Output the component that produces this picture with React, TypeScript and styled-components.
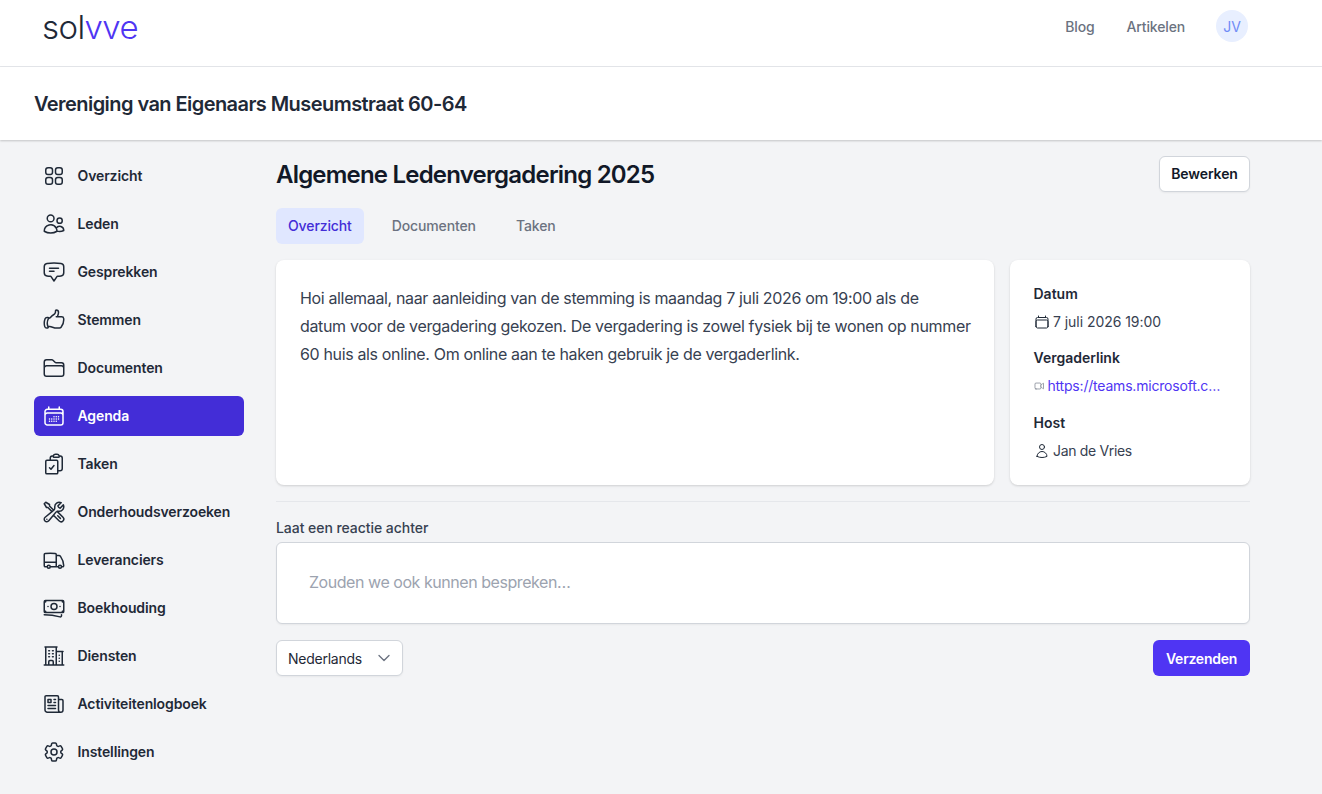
import React from 'react';
import styled, { createGlobalStyle } from 'styled-components';
import { IconType } from 'react-icons';
import {
    HiOutlineSquares2X2,
    HiOutlineUsers,
    HiOutlineChatBubbleBottomCenterText,
    HiOutlineHandThumbUp,
    HiOutlineFolder,
    HiOutlineCalendarDays,
    HiOutlineClipboardDocumentCheck,
    HiOutlineWrenchScrewdriver,
    HiOutlineTruck,
    HiOutlineBanknotes,
    HiOutlineBuildingOffice2,
    HiOutlineNewspaper,
    HiOutlineCog6Tooth,
    HiOutlineCalendar,
    HiOutlineVideoCamera,
    HiOutlineUser,
    HiOutlineChevronDown,
} from 'react-icons/hi2';

const GlobalStyle = createGlobalStyle`
    html, body {
        margin: 0;
        padding: 0;
        background: #f3f4f6;
        font-family: Inter, "Liberation Sans", sans-serif;
        color: #111827;
    }
    * {
        box-sizing: border-box;
    }
`;

const Page = styled.div`
    width: 1322px;
    height: 794px;
    overflow: hidden;
    display: flex;
    flex-direction: column;
`;

const TopBar = styled.header`
    height: 67px;
    flex-shrink: 0;
    background: white;
    border-bottom: 1px solid #e5e7eb;
    display: flex;
    align-items: center;
    justify-content: space-between;
    padding: 0 74px 0 42px;
`;

const Logo = styled.div`
    font-family: Inter, sans-serif;
    font-size: 33px;
    font-weight: 300;
    letter-spacing: -0.6px;
    line-height: 40px;
    color: #1f2937;
    margin-top: -13px;

    > span {
        color: #4f35f3;
    }
`;

const TopNav = styled.nav`
    display: flex;
    align-items: center;
    gap: 32px;
    margin-top: -15px;
`;

const TopLink = styled.a`
    padding-top: 2px;
    font-size: 14px;
    font-weight: 500;
    letter-spacing: -0.15px;
    color: #6b7280;
`;

const Avatar = styled.div`
    width: 32px;
    height: 32px;
    margin-left: -1px;
    border-radius: 50%;
    background: #e8efff;
    color: #6f8cf6;
    font-size: 14px;
    display: flex;
    align-items: center;
    justify-content: center;
    padding-top: 2px;
`;

const SubHeader = styled.div`
    height: 73px;
    flex-shrink: 0;
    background: white;
    box-shadow: 0 1px 2px rgba(0, 0, 0, 0.2);
    display: flex;
    align-items: center;
    padding: 0 34px;
    z-index: 1;
`;

const OrgName = styled.h1`
    margin: 0;
    font-size: 20px;
    font-weight: 600;
    line-height: 28px;
    letter-spacing: -0.56px;
    color: #1f2937;
`;

const Body = styled.div`
    flex: 1;
    display: flex;
    padding: 16px 72px 0 34px;
    gap: 32px;
`;

const Sidebar = styled.nav`
    width: 210px;
    flex-shrink: 0;
    display: flex;
    flex-direction: column;
    gap: 8px;
`;

const SideItem = styled.a<{ $active?: boolean }>`
    height: 40px;
    display: flex;
    align-items: center;
    gap: 11.5px;
    padding: 0 8px;
    border-radius: 6px;
    font-size: 14px;
    font-weight: 600;
    letter-spacing: -0.12px;
    background: ${p => (p.$active ? '#432dd7' : 'transparent')};
    color: ${p => (p.$active ? 'white' : '#1f2937')};

    svg {
        width: 24px;
        height: 24px;
        flex-shrink: 0;
        color: ${p => (p.$active ? 'white' : '#1f2937')};
    }
`;

const SideLabel = styled.span`
    padding-bottom: 2px;
`;

const Main = styled.main`
    flex: 1;
    min-width: 0;
    display: flex;
    flex-direction: column;
`;

const TitleRow = styled.div`
    display: flex;
    align-items: center;
    justify-content: space-between;
    height: 37px;
`;

const Title = styled.h2`
    margin: 0;
    font-size: 24px;
    font-weight: 600;
    line-height: 36px;
    letter-spacing: -0.8px;
    color: #111827;
`;

const EditButton = styled.button`
    height: 36px;
    width: 91px;
    margin-top: -2px;
    border: 1px solid #d1d5db;
    border-radius: 6px;
    background: white;
    font: 600 14px Inter, sans-serif;
    letter-spacing: -0.1px;
    color: #111827;
    box-shadow: 0 1px 2px rgba(0, 0, 0, 0.05);
`;

const Tabs = styled.div`
    display: flex;
    gap: 16px;
    margin-top: 15px;
`;

const Tab = styled.a<{ $active?: boolean }>`
    height: 36px;
    padding: 0 12px 2px;
    border-radius: 6px;
    display: flex;
    align-items: center;
    font-size: 14px;
    font-weight: 500;
    letter-spacing: -0.12px;
    background: ${p => (p.$active ? '#e0e7ff' : 'transparent')};
    color: ${p => (p.$active ? '#432dd7' : '#6b7280')};
`;

const Cards = styled.div`
    display: grid;
    grid-template-columns: 718px 240px;
    gap: 16px;
    margin-top: 16px;
`;

const Card = styled.section`
    height: 225px;
    background: white;
    border-radius: 8px;
    box-shadow: 0 1px 3px rgba(0, 0, 0, 0.1), 0 1px 2px rgba(0, 0, 0, 0.06);
`;

const Description = styled(Card)`
    padding: 24px;
    font-size: 16px;
    line-height: 28px;
    letter-spacing: -0.35px;
    color: #374151;

    > p {
        margin: 0;
        white-space: nowrap;
    }
`;

const Details = styled(Card)`
    padding: 24px 24px 0 23.5px;
    display: flex;
    flex-direction: column;
`;

const DetailLabel = styled.div`
    font-size: 14px;
    font-weight: 600;
    line-height: 20px;
    color: #1f2937;
`;

const DetailValue = styled.div<{ $tall?: boolean }>`
    display: flex;
    align-items: center;
    gap: 3.5px;
    margin-top: 8px;
    margin-bottom: ${p => (p.$tall ? '17px' : '16px')};
    height: 20px;
    font-size: 14px;
    line-height: 20px;
    letter-spacing: -0.05px;
    color: #374151;
    white-space: nowrap;
`;

const DetailIcon = styled.span<{ $small?: boolean }>`
    display: flex;
    width: ${p => (p.$small ? '10.5px' : '16px')};
    justify-content: center;
    color: ${p => (p.$small ? '#6b7280' : '#1f2937')};
`;

const HostName = styled.span`
    letter-spacing: -0.33px;
`;

const MeetingLink = styled.a`
    display: block;
    width: 174px;
    overflow: hidden;
    text-overflow: ellipsis;
    letter-spacing: -0.2px;
    color: #4f35f3;
`;

const Divider = styled.hr`
    margin: 16px 0 0;
    border: 0;
    border-top: 1px solid #e5e7eb;
`;

const CommentLabel = styled.label`
    margin-top: 16px;
    font-size: 14px;
    font-weight: 500;
    line-height: 20px;
    letter-spacing: -0.05px;
    color: #374151;
`;

const CommentBox = styled.div`
    margin-top: 4px;
    height: 82px;
    background: white;
    border: 1px solid #d1d5db;
    border-radius: 6px;
    box-shadow: 0 1px 2px rgba(0, 0, 0, 0.05);
    display: flex;
    align-items: center;
    padding: 0 32px 2px;
    font-size: 16px;
    letter-spacing: -0.45px;
    color: #9ca3af;
`;

const FormRow = styled.div`
    display: flex;
    justify-content: space-between;
    margin-top: 16px;
`;

const LanguageSelect = styled.div`
    width: 127px;
    height: 36px;
    display: flex;
    align-items: center;
    justify-content: space-between;
    padding: 0 10px 0 11px;
    background: white;
    border: 1px solid #d1d5db;
    border-radius: 6px;
    box-shadow: 0 1px 2px rgba(0, 0, 0, 0.05);
    font-size: 14px;
    letter-spacing: -0.25px;
    color: #1f2937;

    svg {
        color: #6b7280;
        stroke-width: 2;
    }
`;

const SendButton = styled.button`
    width: 97px;
    height: 36px;
    border: 0;
    border-radius: 6px;
    background: #4f35f3;
    color: white;
    font: 600 14px Inter, sans-serif;
    letter-spacing: -0.25px;
`;

const menu: { label: string; icon: IconType; active?: boolean }[] = [
    { label: 'Overzicht', icon: HiOutlineSquares2X2 },
    { label: 'Leden', icon: HiOutlineUsers },
    { label: 'Gesprekken', icon: HiOutlineChatBubbleBottomCenterText },
    { label: 'Stemmen', icon: HiOutlineHandThumbUp },
    { label: 'Documenten', icon: HiOutlineFolder },
    { label: 'Agenda', icon: HiOutlineCalendarDays, active: true },
    { label: 'Taken', icon: HiOutlineClipboardDocumentCheck },
    { label: 'Onderhoudsverzoeken', icon: HiOutlineWrenchScrewdriver },
    { label: 'Leveranciers', icon: HiOutlineTruck },
    { label: 'Boekhouding', icon: HiOutlineBanknotes },
    { label: 'Diensten', icon: HiOutlineBuildingOffice2 },
    { label: 'Activiteitenlogboek', icon: HiOutlineNewspaper },
    { label: 'Instellingen', icon: HiOutlineCog6Tooth },
];

const App = () => (
    <Page>
        <GlobalStyle />
        <TopBar>
            <Logo>sol<span>vve</span></Logo>
            <TopNav>
                <TopLink>Blog</TopLink>
                <TopLink>Artikelen</TopLink>
                <Avatar>JV</Avatar>
            </TopNav>
        </TopBar>
        <SubHeader>
            <OrgName>Vereniging van Eigenaars Museumstraat 60-64</OrgName>
        </SubHeader>
        <Body>
            <Sidebar>
                {menu.map(({ label, icon: Icon, active }) => (
                    <SideItem key={label} $active={active}>
                        <Icon />
                        <SideLabel>{label}</SideLabel>
                    </SideItem>
                ))}
            </Sidebar>
            <Main>
                <TitleRow>
                    <Title>Algemene Ledenvergadering 2025</Title>
                    <EditButton>Bewerken</EditButton>
                </TitleRow>
                <Tabs>
                    <Tab $active>Overzicht</Tab>
                    <Tab>Documenten</Tab>
                    <Tab>Taken</Tab>
                </Tabs>
                <Cards>
                    <Description>
                        <p>
                            Hoi allemaal, naar aanleiding van de stemming is maandag 7 juli 2026 om 19:00 als de<br />
                            datum voor de vergadering gekozen. De vergadering is zowel fysiek bij te wonen op nummer<br />
                            60 huis als online. Om online aan te haken gebruik je de vergaderlink.
                        </p>
                    </Description>
                    <Details>
                        <DetailLabel>Datum</DetailLabel>
                        <DetailValue>
                            <DetailIcon><HiOutlineCalendar size={16} /></DetailIcon>
                            7 juli 2026 19:00
                        </DetailValue>
                        <DetailLabel>Vergaderlink</DetailLabel>
                        <DetailValue $tall>
                            <DetailIcon $small><HiOutlineVideoCamera size={12} /></DetailIcon>
                            <MeetingLink>https://teams.microsoft.com/l/meetup-join</MeetingLink>
                        </DetailValue>
                        <DetailLabel>Host</DetailLabel>
                        <DetailValue>
                            <DetailIcon><HiOutlineUser size={16} /></DetailIcon>
                            <HostName>Jan de Vries</HostName>
                        </DetailValue>
                    </Details>
                </Cards>
                <Divider />
                <CommentLabel>Laat een reactie achter</CommentLabel>
                <CommentBox>Zouden we ook kunnen bespreken…</CommentBox>
                <FormRow>
                    <LanguageSelect>
                        Nederlands
                        <HiOutlineChevronDown size={16} />
                    </LanguageSelect>
                    <SendButton>Verzenden</SendButton>
                </FormRow>
            </Main>
        </Body>
    </Page>
);

export default App;
